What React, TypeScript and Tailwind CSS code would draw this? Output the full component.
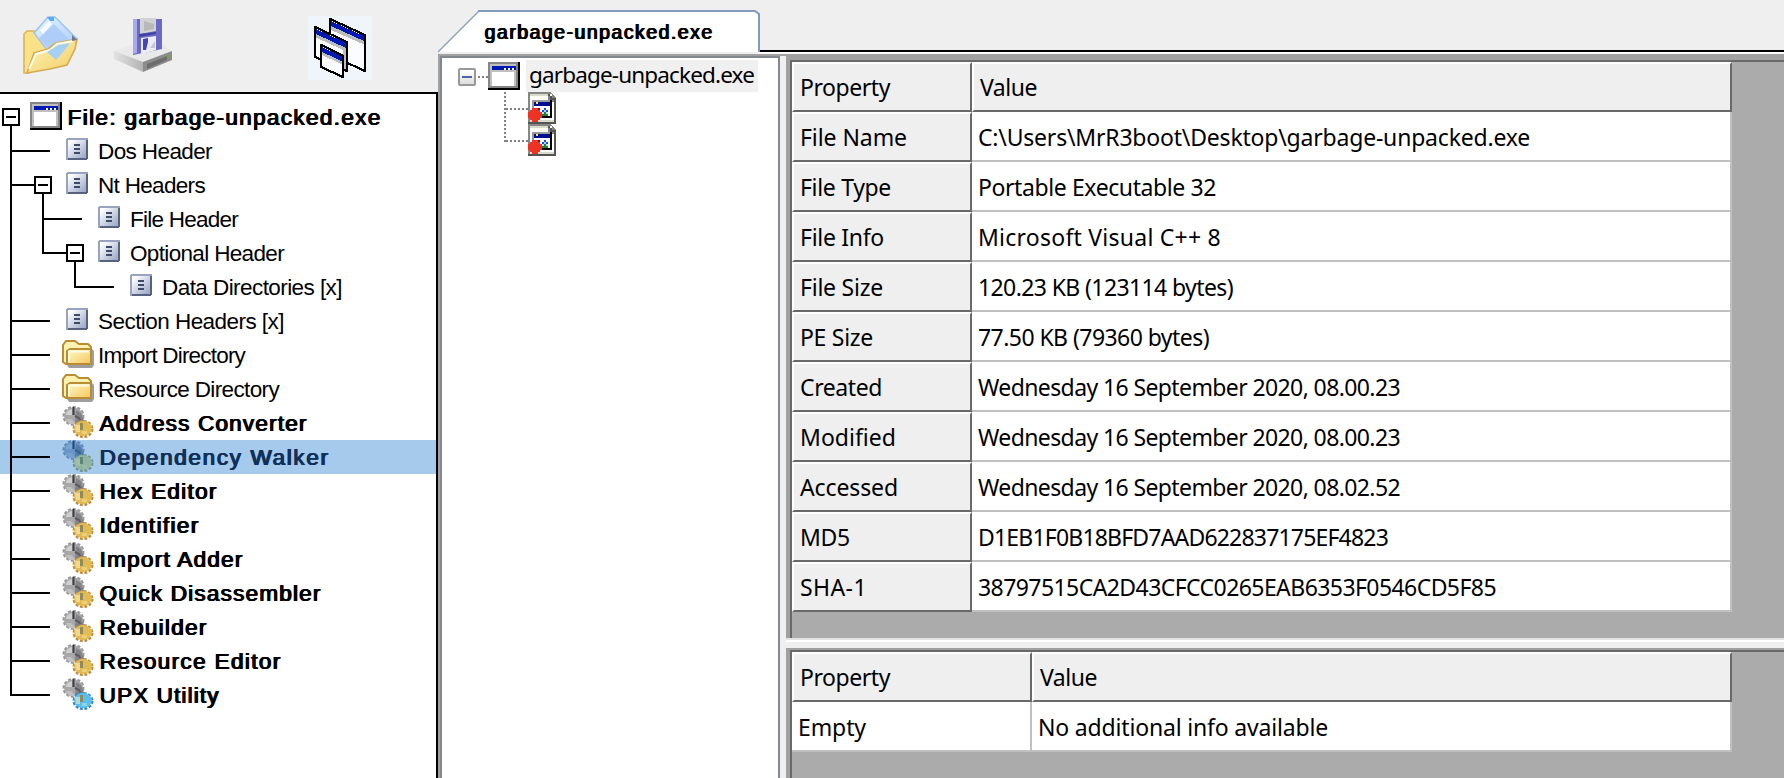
import { useLayoutEffect, useRef, useState, type ReactNode } from "react";

/* Text that spreads its letters so that the run fills `width` pixels. */
function Fit({ text, width, className }: { text: string; width: number; className?: string }) {
  const ref = useRef<HTMLSpanElement>(null);
  const [spacing, setSpacing] = useState(0);
  useLayoutEffect(() => {
    if (ref.current) {
      const natural = ref.current.getBoundingClientRect().width - spacing * text.length;
      setSpacing((width - natural) / text.length);
    }
  }, [text, width]);
  return (
    <span ref={ref} className={`inline-block whitespace-pre ${className ?? ""}`} style={{ letterSpacing: spacing }}>
      {text}
    </span>
  );
}

function OpenFolderIcon() {
  return (
    <svg width="56" height="60" viewBox="0 0 56 60">
      <defs>
        <linearGradient id="paper" x1="0" y1="0" x2="1" y2="1">
          <stop offset="0" stopColor="#e6f3ff" />
          <stop offset="1" stopColor="#a9cdfb" />
        </linearGradient>
        <linearGradient id="fold" x1="0" y1="0" x2="1" y2="1">
          <stop offset="0" stopColor="#fdf6b8" />
          <stop offset="1" stopColor="#f2cd66" />
        </linearGradient>
      </defs>
      <path d="M1 57V18l3-3h7l3 3 16 14L6 57z" fill="#fbe288" stroke="#dcb458" strokeWidth="1.600" />
      <path d="M11 17 25 1h7l22 22-30 11z" fill="url(#paper)" stroke="#9cc3ea" strokeWidth="1.400" />
      <path d="M31 8 46 23 25 32 16 22z" fill="#aecdf8" />
      <path d="M17 14 26 5l3 3-9 10z" fill="#f6fbff" />
      <path d="M24 1h7v4h-4z" fill="#55adf5" />
      <path d="M4 57 11 37l14-4 8-6 21-4-2 10-8 16-17 4z" fill="url(#fold)" stroke="#d6ab52" strokeWidth="1.600" />
      <path d="M6 53 13 38l14-4 7-6 16-3" fill="none" stroke="#fffef0" strokeWidth="2" />
      <path d="M24 36 35 29l12-2-6 8-8 9z" fill="#a5d0f4" />
      <path d="M49 19l5 5-5 1z" fill="#67799a" />
    </svg>
  );
}

function SaveIcon() {
  return (
    <svg width="60" height="58" viewBox="0 0 60 58">
      <defs>
        <linearGradient id="drive" x1="0" y1="0" x2="1" y2="0">
          <stop offset="0" stopColor="#e2e2e2" />
          <stop offset="1" stopColor="#b4b4b4" />
        </linearGradient>
      </defs>
      <path d="M1 34 22 27h28l9 8-30 12z" fill="#e9e9e9" />
      <path d="M1 34 30 45v10L1 42z" fill="url(#drive)" />
      <path d="M30 45 59 34v9L30 55z" fill="#8c8c8c" />
      <path d="M34 47 54 39v4L34 52z" fill="#6e6e6e" />
      <path d="M20 2h29v30l-29 6z" fill="#6a69c6" />
      <path d="M20 2h4v34l-4 1z" fill="#aaa9ea" />
      <path d="M27 1h16v13l-16 3z" fill="#d2d2d2" />
      <path d="M31 4l10 3v5l-10 2z" fill="#b9b9b9" />
      <path d="M26 17l17-2v2l-17 3z" fill="#4142a4" />
      <path d="M28 21l15-2v14l-15 4z" fill="#ececf4" />
      <path d="M30 22l5-1v4l-2 8h-3z" fill="#4546b4" />
      <path d="M37 31l5-7v7z" fill="#c4c4d4" />
      <rect x="54" y="38" width="3" height="3" fill="#69ad43" />
    </svg>
  );
}

function WindowsIcon() {
  return (
    <svg width="64" height="64" viewBox="0 0 32 32" className="bg-[#f0f4fb]" shapeRendering="crispEdges">
      <g stroke="#000" strokeWidth="1.100">
        <path d="M11 1.500 28.500 9.500v18L11 19.500z" fill="#fafcff" />
        <path d="M11.500 2.500 28 10v2.500L11.500 5z" fill="#0019b5" stroke="none" />
        <path d="M11.500 5 28 12.500v1.800L11.500 7z" fill="#bdbdbd" stroke="none" />
        <path d="M3.500 5.500 19.500 13v14.500l-16-7z" fill="#fafcff" />
        <path d="M4 6.500 19 13.400v2.600L4 9z" fill="#0019b5" stroke="none" />
        <path d="M4 9 19 16v1.600L4 10.800z" fill="#bdbdbd" stroke="none" />
        <path d="M17.500 16h1.500v10.500h-1.500z" fill="#bdbdbd" stroke="none" />
        <path d="M6.500 14.500 17.500 19.800v10.700l-11-5z" fill="#fafcff" />
        <path d="M7 15.500 17 20.200v2.400L7 18z" fill="#0019b5" stroke="none" />
        <path d="M7 18 17 22.600v1.500L7 19.600z" fill="#bdbdbd" stroke="none" />
      </g>
    </svg>
  );
}

function WindowIcon() {
  return (
    <svg width="32" height="28" viewBox="0 0 16 14" shapeRendering="crispEdges">
      <rect width="16" height="14" fill="#000" />
      <rect width="15" height="13" fill="#868686" />
      <rect x="1" y="1" width="14" height="12" fill="#c0c0c0" />
      <rect x="2" y="2" width="12" height="2" fill="#0018b4" />
      <path d="M8 3h1v1H8zM10 3h1v1h-1zM12 3h1v1h-1z" fill="#fff" />
      <rect x="2" y="5" width="11" height="7" fill="#fff" />
      <rect x="14" y="1" width="1" height="12" fill="#868686" />
      <rect x="1" y="12" width="14" height="1" fill="#868686" />
    </svg>
  );
}

function HeaderIcon() {
  return (
    <svg width="22" height="22" viewBox="0 0 11 11" shapeRendering="crispEdges">
      <defs>
        <linearGradient id="header" x1="0" y1="0" x2="1" y2="1">
          <stop offset="0.1" stopColor="#fff" />
          <stop offset="0.9" stopColor="#a3aecb" />
        </linearGradient>
      </defs>
      <rect width="11" height="11" rx="1" fill="#98a4bf" />
      <path d="M1 10h9V1h1v9l-1 1H1z" fill="#56627f" />
      <rect x="1" y="1" width="9" height="9" fill="url(#header)" />
      <path d="M4 3h3v1H4zM4 5h3v1H4zM4 7h3v1H4z" fill="#3c4b68" />
    </svg>
  );
}

function FolderIcon() {
  return (
    <svg width="32" height="28" viewBox="0 0 32 28">
      <defs>
        <linearGradient id="closed" x1="0" y1="0" x2="1" y2="1">
          <stop offset="0" stopColor="#fffbc6" />
          <stop offset="1" stopColor="#f4c75f" />
        </linearGradient>
      </defs>
      <path d="M5 25h25V9l2 2v14l-2 3H7z" fill="#7d7d7d" opacity="0.75" />
      <path d="M1 22V5l3-4h9l4 3h9l3 3v17H4z" fill="#fff2b0" stroke="#b98d34" strokeWidth="2" />
      <path d="M5 24V11l3-2h21v15z" fill="url(#closed)" stroke="#b98d34" strokeWidth="2" />
      <path d="M7 22V11.500h20" fill="none" stroke="#fffde6" strokeWidth="2" />
    </svg>
  );
}

function GearsIcon({ front, edge, selected }: { front: string; edge: string; selected?: boolean }) {
  return (
    <svg width="32" height="32" viewBox="0 0 32 32">
      <ellipse cx="11.500" cy="10" rx="9.500" ry="8.500" fill="none" stroke={selected ? "#6288b4" : "#98989c"} strokeWidth="3" strokeDasharray="3 1.600" />
      <ellipse cx="11.500" cy="10" rx="9.500" ry="8.500" fill={selected ? "#6a95c6" : "#a8a8a8"} />
      <path d="M14 4l5 3 3 8-2 4-7-2z" fill={selected ? "#527ba9" : "#838387"} />
      <path d="M4 9a7 6 0 0 1 6-6v6z" fill={selected ? "#7aa6d4" : "#cfcfcf"} />
      <path d="M4 13h5l5 5H7z" fill={selected ? "#759fcc" : "#c0c0c0"} />
      <path d="M11.500 1v8" fill="none" stroke={selected ? "#23487a" : "#3c3c42"} strokeWidth="2" />
      <path d="M13 10l4 2 3 5" fill="none" stroke={selected ? "#34618f" : "#5c5c60"} strokeWidth="2" />
      <ellipse cx="21" cy="23" rx="9" ry="7.600" fill="none" stroke={edge} strokeWidth="3" strokeDasharray="2.800 1.600" />
      <ellipse cx="21" cy="22.500" rx="9" ry="7.400" fill={front} />
      <path d="M13 19h5v7h-4z" fill="#fff6c0" opacity={selected ? 0.15 : 0.5} />
      <path d="M18 17h3v7h-3z" fill={selected ? "#62847f" : "#8c8a5e"} />
      <path d="M20 25h5v3h-5z" fill="#fff6c0" opacity={selected ? 0.1 : 0.35} />
    </svg>
  );
}

function ModuleIcon() {
  return (
    <svg width="28" height="32" viewBox="0 0 14 16" shapeRendering="crispEdges">
      <path d="M0 0h11l3 3v13H0z" fill="#868686" />
      <path d="M1 1h9v4h3v9H1z" fill="#fff" />
      <path d="M1 1h9v1H1zM1 14h12v1H1z" fill="#d9d9cc" />
      <path d="M11 1h1v2h1v1h-2zM11 4h1v1h-1z" fill="#fff" />
      <path d="M10 1h1v1h1v1h1v1h-2V2h-1zM13 3h1v13H0v-1h13z" fill="#545454" />
      <path d="M2 4h10v9H2z" fill="#000" />
      <path d="M2 4h9v8H2z" fill="#9a9a9a" />
      <path d="M3 5h8v2H3z" fill="#000e94" />
      <path d="M4 5h1v1H4z" fill="#ffe04a" />
      <path d="M3 7h8v5H3z" fill="#fff" />
      <path d="M8 8h1v1H8zM7 9h1v1H7zM9 9h1v1H9z" fill="#1746ff" />
      <path d="M8 9h1v1H8zM7 10h1v1H7zM9 10h1v1H9z" fill="#a5e8ff" />
      <path d="M8 10h1v1h1v1H7v-1h1z" fill="#2c7a2b" />
      <path d="M2 8h3v1h1v1h1v3H6v1H5v1H2v-1H1v-1H0v-3h1V9h1z" fill="#ee3224" />
      <path d="M5 8h1v1H5z" fill="#8b0000" />
    </svg>
  );
}

type Kind = "header" | "folder" | "gear" | "blue";
type Node = { text: string; width: number; depth: 1 | 2 | 3; kind: Kind; open?: boolean; last?: boolean; selected?: boolean };

const NODES: Node[] = [
  { text: "Dos Header", width: 114, depth: 1, kind: "header" },
  { text: "Nt Headers", width: 107, depth: 1, kind: "header", open: true },
  { text: "File Header", width: 108, depth: 2, kind: "header" },
  { text: "Optional Header", width: 154, depth: 2, kind: "header", open: true, last: true },
  { text: "Data Directories [x]", width: 180, depth: 3, kind: "header", last: true },
  { text: "Section Headers [x]", width: 186, depth: 1, kind: "header" },
  { text: "Import Directory", width: 147, depth: 1, kind: "folder" },
  { text: "Resource Directory", width: 181, depth: 1, kind: "folder" },
  { text: "Address Converter", width: 208, depth: 1, kind: "gear" },
  { text: "Dependency Walker", width: 230, depth: 1, kind: "gear", selected: true },
  { text: "Hex Editor", width: 118, depth: 1, kind: "gear" },
  { text: "Identifier", width: 100, depth: 1, kind: "gear" },
  { text: "Import Adder", width: 144, depth: 1, kind: "gear" },
  { text: "Quick Disassembler", width: 222, depth: 1, kind: "gear" },
  { text: "Rebuilder", width: 108, depth: 1, kind: "gear" },
  { text: "Resource Editor", width: 182, depth: 1, kind: "gear" },
  { text: "UPX Utility", width: 120, depth: 1, kind: "blue", last: true },
];

/* Heavy look made by doubling the regular strokes sideways, as bitmap UI fonts do. */
const HEAVY = "[text-shadow:0.6px_0_0_currentColor,1.3px_0_0_currentColor]";

function Toggle({ stem }: { stem?: boolean }) {
  return (
    <div className="flex w-[18px] shrink-0 flex-col items-center pt-2">
      <div className="flex h-[18px] w-[18px] items-center justify-center border-2 border-black bg-white">
        <div className="h-0.5 w-2.5 bg-black" />
      </div>
      {stem && <div className="w-0.5 flex-1 bg-black" />}
    </div>
  );
}

function Branch({ node }: { node: Node }) {
  return (
    <div className={node.open ? "w-6" : "w-10"}>
      <div className="h-[18px] border-b-2 border-l-2 border-black" />
      {!node.last && <div className="h-4 border-l-2 border-black" />}
    </div>
  );
}

const LEAD = { 1: "w-[62px]", 2: "w-[94px]", 3: "w-[126px]" };

function TreeRow({ node }: { node: Node }) {
  const heavy = node.kind === "gear" || node.kind === "blue";
  return (
    <div className={`flex h-[34px] ${node.selected ? "bg-[#a6caec]" : ""}`}>
      <div className={`flex shrink-0 pl-2.5 ${LEAD[node.depth]}`}>
        {node.depth > 1 && <div className={`w-8 shrink-0 border-l-2 border-black`} />}
        {node.depth > 2 && <div className="w-8 shrink-0" />}
        <Branch node={node} />
        {node.open && <Toggle stem />}
      </div>
      <div className="w-8 shrink-0">
        {node.kind === "header" && <div className="pt-1 pl-1"><HeaderIcon /></div>}
        {node.kind === "folder" && <div className="pt-0.5"><FolderIcon /></div>}
        {node.kind === "gear" && (node.selected
          ? <GearsIcon front="#8fb5a2" edge="#74938c" selected />
          : <GearsIcon front="#e3bb55" edge="#bd8b3c" />)}
        {node.kind === "blue" && <GearsIcon front="#5cc0ee" edge="#3a86c4" />}
      </div>
      <Fit
        text={node.text}
        width={node.width}
        className={`text-[22.5px] leading-[35px] ${heavy ? `ml-[5px] ${HEAVY}` : "ml-1"} ${node.selected ? "text-[#10305a]" : "text-black"}`}
      />
    </div>
  );
}

function LeftPanel() {
  return (
    <div className="flex w-[438px] shrink-0 flex-col">
      <div className="flex h-[92px] shrink-0 items-start pt-4 pl-[23px]">
        <OpenFolderIcon />
        <div className="ml-[34px] pt-px"><SaveIcon /></div>
        <div className="ml-[135px]"><WindowsIcon /></div>
      </div>
      <div className="flex-1 border-t-2 border-r-2 border-black bg-white pt-1.5 font-['Liberation_Sans',sans-serif]">
        <div className="flex h-[34px] pl-0.5">
          <Toggle stem />
          <div className="ml-2.5 pt-0.5"><WindowIcon /></div>
          <Fit text="File: garbage-unpacked.exe" width={314} className={`ml-[5px] text-[22.5px] leading-[35px] ${HEAVY}`} />
        </div>
        {NODES.map((n) => <TreeRow key={n.text} node={n} />)}
      </div>
    </div>
  );
}

const DOT_X = "bg-[repeating-linear-gradient(90deg,#808080_0_2px,transparent_2px_4px)]";
const DOT_Y = "bg-[repeating-linear-gradient(180deg,#808080_0_2px,transparent_2px_4px)]";

function ModuleTree() {
  return (
    <div className="w-[342px] shrink-0 border-t-2 border-l-2 border-[#a0a0a0]">
      <div className="h-full border-2 border-b-0 border-[#828790] bg-white pt-0.5">
        <div className="flex h-8 items-start pl-4">
          <div className="mt-2 flex h-[18px] w-[18px] items-center justify-center rounded-[2px] border-2 border-[#989898] bg-linear-to-b from-white to-[#dedede]">
            <div className="h-0.5 w-2.5 bg-[#4a66a8]" />
          </div>
          <div className={`mt-4 ml-0.5 h-0.5 w-2.5 ${DOT_X}`} />
          <div className="mt-0.5"><WindowIcon /></div>
          <div className="ml-1.5 h-8 w-[232px] bg-[#f0f0f0] pl-[3px] font-['Noto_Sans','Open_Sans',sans-serif]">
            <Fit text="garbage-unpacked.exe" width={225} className="text-[22.5px] leading-[30px]" />
          </div>
        </div>
        {[0, 1].map((i) => (
          <div key={i} className="flex h-8 pl-[62px]">
            <div className={`w-0.5 ${DOT_Y} ${i ? "h-[18px]" : "h-8"}`} />
            <div className={`mt-4 h-0.5 w-[22px] ${DOT_X}`} />
            <ModuleIcon />
          </div>
        ))}
      </div>
    </div>
  );
}

const FILE_ROWS: [string, number, string, number][] = [
  ["File Name", 107, "C:\\Users\\MrR3boot\\Desktop\\garbage-unpacked.exe", 552],
  ["File Type", 91, "Portable Executable 32", 238],
  ["File Info", 84, "Microsoft Visual C++ 8", 243],
  ["File Size", 83, "120.23 KB (123114 bytes)", 255],
  ["PE Size", 73, "77.50 KB (79360 bytes)", 231],
  ["Created", 82, "Wednesday 16 September 2020, 08.00.23", 422],
  ["Modified", 96, "Wednesday 16 September 2020, 08.00.23", 422],
  ["Accessed", 98, "Wednesday 16 September 2020, 08.02.52", 422],
  ["MD5", 50, "D1EB1F0B18BFD7AAD622837175EF4823", 410],
  ["SHA-1", 67, "38797515CA2D43CFCC0265EAB6353F0546CD5F85", 518],
];

function Fixed({ children, className }: { children: ReactNode; className: string }) {
  return (
    <div className={`h-[50px] shrink-0 border-2 border-t-white border-r-[#696969] border-b-[#696969] border-l-white bg-[#efefef] pl-1.5 leading-[46px] ${className}`}>
      {children}
    </div>
  );
}

function Cell({ children, className }: { children: ReactNode; className: string }) {
  return (
    <div className={`h-[50px] shrink-0 border-r-2 border-b-2 border-[#c0c0c0] bg-white leading-[50px] ${className}`}>
      {children}
    </div>
  );
}

function Details() {
  return (
    <div className="flex min-w-0 flex-1 flex-col font-['Noto_Sans','Open_Sans',sans-serif] text-[23px] text-black">
      <div className="h-[584px] shrink-0 border-t-[6px] border-l-4 border-[#a0a0a0]">
        <div className="h-full border-t-2 border-l-2 border-[#696969] bg-[#ababab]">
          <div className="flex">
            <Fixed className="w-[180px]"><Fit text="Property" width={90} /></Fixed>
            <Fixed className="w-[760px]"><Fit text="Value" width={57} /></Fixed>
          </div>
          {FILE_ROWS.map(([name, nameWidth, value, valueWidth]) => (
            <div key={name} className="flex">
              <Fixed className="w-[180px]"><Fit text={name} width={nameWidth} /></Fixed>
              <Cell className="w-[760px] pl-1.5"><Fit text={value} width={valueWidth} /></Cell>
            </div>
          ))}
        </div>
      </div>
      <div className="h-2.5 shrink-0 border-t-2 border-[#e3e3e3]">
        <div className="h-0.5 bg-white" />
      </div>
      <div className="flex-1 border-t-2 border-l-4 border-[#a0a0a0]">
        <div className="h-full border-t-2 border-l-2 border-[#696969] bg-[#ababab]">
          <div className="flex">
            <Fixed className="w-[240px]"><Fit text="Property" width={90} /></Fixed>
            <Fixed className="w-[700px]"><Fit text="Value" width={57} /></Fixed>
          </div>
          <div className="flex">
            <Cell className="w-[240px] pl-1.5"><Fit text="Empty" width={68} /></Cell>
            <Cell className="w-[700px] pl-1.5"><Fit text="No additional info available" width={290} /></Cell>
          </div>
        </div>
      </div>
    </div>
  );
}

function TabStrip() {
  return (
    <div className="flex h-[54px] shrink-0 items-end">
      <div className="relative h-full w-80 shrink-0">
        <svg className="absolute inset-0" width="322" height="54" viewBox="0 0 322 54">
          <path d="M0 52 41 11H318l3 3v38z" fill="#fff" />
          <path d="M0 52 41 11" fill="none" stroke="#8aa3bf" strokeWidth="1.500" />
          <path d="M40 11H317l4 3v38" fill="none" stroke="#819cbb" strokeWidth="2" />
        </svg>
        <div className="relative pl-[46px] font-['Liberation_Sans',sans-serif]">
          <Fit text="garbage-unpacked.exe" width={229} className={`pt-[20px] text-[19.5px] leading-6 ${HEAVY}`} />
        </div>
      </div>
      <div className="h-1 flex-1 border-t-2 border-black bg-[#fcfcfc]" />
    </div>
  );
}

export default function App() {
  return (
    <div className="flex h-[778px] w-[1784px] overflow-hidden bg-[#efefef]">
      <LeftPanel />
      <div className="flex min-w-0 flex-1 flex-col">
        <TabStrip />
        <div className="flex min-h-0 flex-1">
          <ModuleTree />
          <div className="w-1.5 shrink-0 border-t-2 border-t-[#a0a0a0] bg-[#efefef]" />
          <Details />
        </div>
      </div>
    </div>
  );
}
